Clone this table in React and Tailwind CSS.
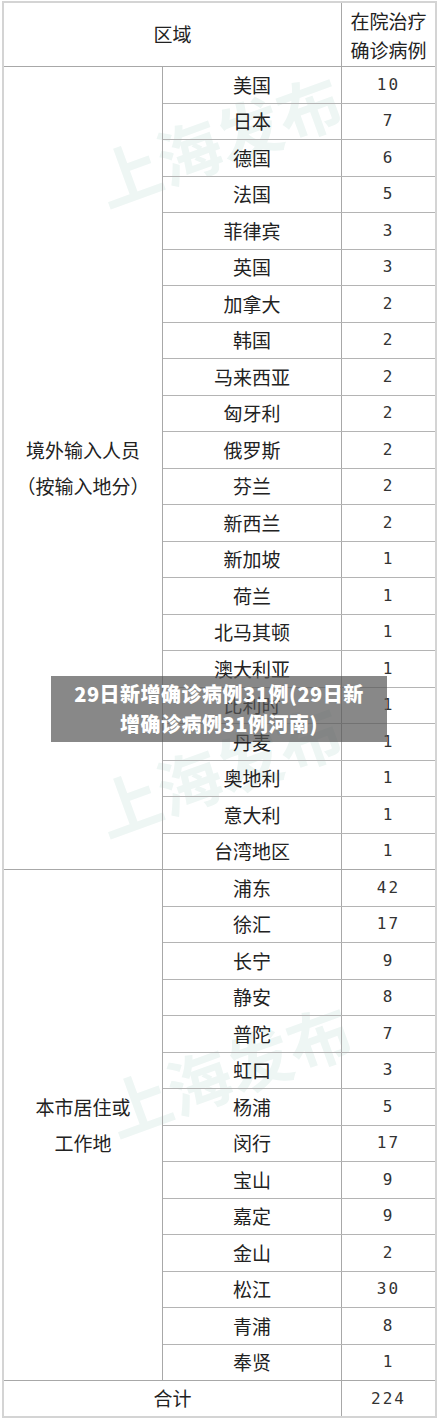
import React from "react";

const overseas = [
  ["美国", 10], ["日本", 7], ["德国", 6], ["法国", 5], ["菲律宾", 3], ["英国", 3],
  ["加拿大", 2], ["韩国", 2], ["马来西亚", 2], ["匈牙利", 2], ["俄罗斯", 2], ["芬兰", 2],
  ["新西兰", 2], ["新加坡", 1], ["荷兰", 1], ["北马其顿", 1], ["澳大利亚", 1], ["比利时", 1],
  ["丹麦", 1], ["奥地利", 1], ["意大利", 1], ["台湾地区", 1],
];

const local = [
  ["浦东", 42], ["徐汇", 17], ["长宁", 9], ["静安", 8], ["普陀", 7], ["虹口", 3], ["杨浦", 5],
  ["闵行", 17], ["宝山", 9], ["嘉定", 9], ["金山", 2], ["松江", 30], ["青浦", 8], ["奉贤", 1],
];

const cjk = { fontFamily: '"Noto Sans CJK SC", "Noto Sans", sans-serif' };
const mono = { fontFamily: '"DejaVu Sans Mono", "Liberation Mono", monospace' };

function Group({ label, rows }) {
  return (
    <div className="flex border-b border-[#a8a8a8]">
      <div className="w-[159px] shrink-0 flex items-center justify-center border-r border-[#a8a8a8] text-[19px] leading-[36px] text-[#222] text-center">
        {label}
      </div>
      <div className="flex-1 flex flex-col">
        {rows.map(([name, n], i) => (
          <div
            key={name}
            className={`flex ${i < rows.length - 1 ? "h-[36.5px] border-b border-[#b4b4b4]" : "h-[35.5px]"}`}
          >
            <div className="w-[179px] flex items-center justify-center border-r border-[#a8a8a8] text-[19px] text-[#222]">
              {name}
            </div>
            <div className="flex-1 flex items-center justify-center text-[16px] text-[#333] tracking-[2px]" style={mono}>
              {n}
            </div>
          </div>
        ))}
      </div>
    </div>
  );
}

function Watermark({ top, left }) {
  return (
    <div
      className="absolute text-[64px] font-bold text-[#eef6f4] -rotate-[20deg] pointer-events-none select-none"
      style={{ top, left }}
    >
      上海发布
    </div>
  );
}

export default function App() {
  return (
    <div className="relative w-[439px] h-[1419px] bg-white overflow-hidden" style={cjk}>
      <Watermark top={90} left={90} />
      <Watermark top={720} left={90} />
      <Watermark top={1020} left={100} />

      <div className="relative mx-[2px] mt-[1px] border-2 border-[#d4d4d4]">
        {/* header */}
        <div className="flex h-[64px] border-b border-[#a8a8a8]">
          <div className="w-[338px] flex items-center justify-center border-r border-[#a8a8a8] text-[19px] text-[#222]">
            区域
          </div>
          <div className="flex-1 flex flex-col items-center justify-center text-[19px] leading-[29px] text-[#222]">
            <span>在院治疗</span>
            <span>确诊病例</span>
          </div>
        </div>

        <Group
          label={
            <>
              境外输入人员
              <br />
              （按输入地分）
            </>
          }
          rows={overseas}
        />
        <Group
          label={
            <>
              本市居住或
              <br />
              工作地
            </>
          }
          rows={local}
        />

        {/* total */}
        <div className="flex h-[35px]">
          <div className="w-[338px] flex items-center justify-center border-r border-[#a8a8a8] text-[19px] text-[#222]">
            合计
          </div>
          <div className="flex-1 flex items-center justify-center text-[16px] text-[#333] tracking-[2px]" style={mono}>
            224
          </div>
        </div>
      </div>

      {/* title overlay */}
      <div className="absolute left-[51px] top-[676px] w-[336px] h-[66px] bg-[#555]/70 flex items-center justify-center">
        <p className="text-white font-black text-[20px] leading-[30px] text-center tracking-[0.5px]">
          29日新增确诊病例31例(29日新
          <br />
          增确诊病例31例河南)
        </p>
      </div>
    </div>
  );
}
